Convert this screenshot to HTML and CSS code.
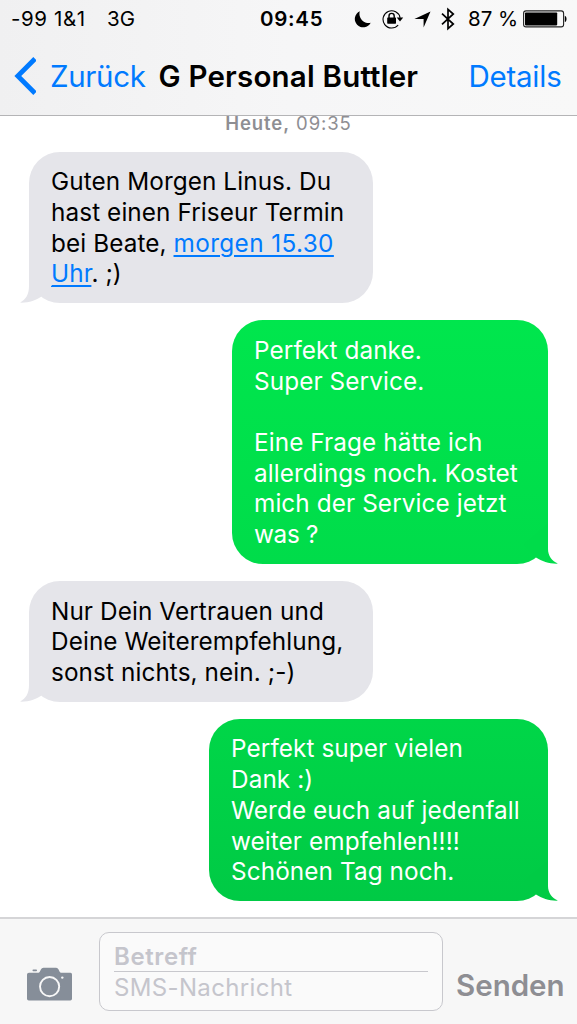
FILE: index.html
```html
<!DOCTYPE html>
<html lang="de">
<head>
<meta charset="utf-8">
<title>Nachrichten</title>
<link rel="stylesheet" href="styles.css">
</head>
<body>
<div class="phone">
  <header class="header">
    <div class="status">
      <div class="carrier"><span class="operator">-99 1&amp;1</span><span>3G</span></div>
      <div class="clock">09:45</div>
      <div class="indicators">
        <svg class="moon" width="17" height="17" viewBox="0 0 17 17"><path d="M5.800.3A8.400 8.400 0 1 0 16.700 11.800 9.200 9.200 0 0 1 5.800.3Z"/></svg>
        <svg class="lock" width="22" height="20" viewBox="0 0 22 20"><path d="M16.200 16A8.600 8.600 0 1 1 18.100 8.800" fill="none" stroke="#000" stroke-width="1.100"/><path d="M14.700 8.600h6.500L18 12.400Z"/><rect x="5.200" y="8.500" width="8.800" height="6.200" rx=".6"/><path d="M7 9V7a2.600 2.600 0 0 1 5.200 0v2" fill="none" stroke="#000" stroke-width="1.400"/></svg>
        <svg class="arrow" width="17" height="17" viewBox="0 0 17 17"><path d="M16.500.5 9.600 16.400V8.100H.4Z"/></svg>
        <svg class="bluetooth" width="14" height="24" viewBox="0 0 14 24"><path d="M1 6.600 12.300 17 7 21.700V2.300L12.300 7 1 17.400" fill="none" stroke="#000" stroke-width="1.700"/></svg>
        <span class="percent">87 %</span>
        <svg class="battery" width="44" height="18" viewBox="0 0 44 18"><rect x=".6" y=".9" width="40" height="16" rx="2.400" fill="none" stroke="#222" stroke-width="1.100"/><rect x="2" y="2.400" width="32.200" height="13" rx=".8"/><path d="M41.800 5.800c2.300.5 2.300 5.800 0 6.300Z"/></svg>
      </div>
    </div>
    <nav class="nav">
      <a class="back"><svg width="23" height="38" viewBox="0 0 23 38"><path d="M22 1.800 4.800 19l17.200 17.200" fill="none" stroke="#007aff" stroke-width="4.800"/></svg><span>Zurück</span></a>
      <h1 class="title">G Personal Buttler</h1>
      <a class="details">Details</a>
    </nav>
  </header>
  <main class="messages">
    <p class="date"><b>Heute,</b> 09:35</p>
    <div class="bubble received">
      <span class="line">Guten Morgen Linus. Du</span>
      <span class="line">hast einen Friseur Termin</span>
      <span class="line">bei Beate, <a class="link time">morgen 15.30</a></span>
      <span class="line"><a class="link">Uhr</a>. ;)</span>
      <svg class="tail" width="40" height="40" viewBox="0 0 40 40"><path d="M9 0V23C9 31 6 36.500 0 39.600C8 40 16 37.500 21.500 33.500L34 20Z"/></svg>
    </div>
    <div class="bubble sent question">
      <span class="line">Perfekt danke.</span>
      <span class="line">Super Service.</span>
      <span class="line">&nbsp;</span>
      <span class="line">Eine Frage hätte ich</span>
      <span class="line">allerdings noch. Kostet</span>
      <span class="line">mich der Service jetzt</span>
      <span class="line tight">was ?</span>
      <svg class="tail" width="40" height="40" viewBox="0 0 40 40"><path d="M30 0V25C30 32 34 37 40 39.600C32 40 24 37.500 18 33.500L6 20Z"/></svg>
    </div>
    <div class="bubble received">
      <span class="line">Nur Dein Vertrauen und</span>
      <span class="line">Deine Weiterempfehlung,</span>
      <span class="line">sonst nichts, nein. ;-)</span>
      <svg class="tail" width="40" height="40" viewBox="0 0 40 40"><path d="M9 0V23C9 31 6 36.500 0 39.600C8 40 16 37.500 21.500 33.500L34 20Z"/></svg>
    </div>
    <div class="bubble sent thanks">
      <span class="line">Perfekt super vielen</span>
      <span class="line">Dank :)</span>
      <span class="line">Werde euch auf jedenfall</span>
      <span class="line">weiter empfehlen!!!!</span>
      <span class="line">Schönen Tag noch.</span>
      <svg class="tail" width="40" height="40" viewBox="0 0 40 40"><path d="M30 0V25C30 32 34 37 40 39.600C32 40 24 37.500 18 33.500L6 20Z"/></svg>
    </div>
  </main>
  <footer class="composer">
    <svg class="camera" width="46" height="34" viewBox="0 0 46 34"><path d="M2 5.800H11.500C13.300 5.800 13.500.8 16.500.8H29c3 0 3.200 5 5 5H43.500Q45 5.800 45 7.500V31.800Q45 33.500 43.300 33.500H1.800Q0 33.500 0 31.800V7.600Q0 5.800 2 5.800Z" fill="#868e99"/><rect x="5.500" y="2.600" width="4.500" height="1.700" rx=".8" fill="#868e99"/><circle cx="22.600" cy="19.600" r="9.600" fill="none" stroke="#f7f7f7" stroke-width="1.900"/><circle cx="35.300" cy="10.600" r="1.200" fill="#f7f7f7"/></svg>
    <div class="field"><div class="subject">Betreff</div><div class="body">SMS-Nachricht</div></div>
    <div class="send">Senden</div>
  </footer>
</div>
</body>
</html>
```
FILE: styles.css
```css
* { box-sizing: border-box; }
body { margin: 0; background: #fff; font-family: Inter, "Liberation Sans", sans-serif; font-feature-settings: "calt" 0; color: #000; }
.phone { width: 577px; height: 1024px; display: flex; flex-direction: column; overflow: hidden; }
svg { display: block; flex: none; }

.header { flex: none; height: 116px; border-bottom: 1px solid #b4b4b6; background: linear-gradient(90deg, #f0f0f1, #f6f6f7 50%, #f8f8f8); white-space: nowrap; }
.status { display: grid; grid-template-columns: 260px 94px 1fr; height: 38px; align-items: center; font-size: 20.5px; line-height: 38px; }
.carrier { display: flex; padding-left: 11px; }
.operator { width: 96px; letter-spacing: 0.6px; }
.clock { font-weight: 600; letter-spacing: 0.7px; }
.indicators { display: flex; align-items: center; }
.lock { margin-left: 11px; }
.arrow { margin-left: 10px; }
.bluetooth { margin-left: 10px; }
.percent { margin-left: 13px; }
.battery { margin-left: 5px; }
.nav { display: flex; align-items: center; height: 76px; font-size: 29.5px; padding-left: 13px; }
.back { display: flex; align-items: center; gap: 14px; width: 145.5px; color: #007aff; letter-spacing: -0.35px; }
.title { margin: 0; width: 310px; font-size: 29.5px; font-weight: 600; letter-spacing: 0.2px; }
.details { color: #007aff; letter-spacing: -0.25px; }

.messages { flex: none; height: 801px; }
.date { margin: 0 0 17px; height: 18.5px; line-height: 14px; font-size: 18.5px; letter-spacing: 0.9px; color: #8e8e93; text-align: center; }
.date b { font-weight: 600; }
.bubble { position: relative; padding: 14.8px 22px 14.2px; border-radius: 31px; margin-bottom: 16.8px; font-size: 24.3px; line-height: 30.7px; letter-spacing: 0.1px; white-space: nowrap; }
.line { display: block; width: max-content; }
.tight { letter-spacing: -0.3px; }
.received { margin-left: 29px; background: #e5e5ea; width: 344px; }
.sent { margin-left: auto; margin-right: 29px; color: #fff; }
.question { width: 316px; background: linear-gradient(#00e64d, #00dc4a); }
.thanks { width: 339px; background: linear-gradient(#00d648, #00ca45); }
.link { color: #007aff; text-decoration: underline; text-decoration-thickness: 1.5px; text-underline-offset: 3px; }
.time { letter-spacing: 0.4px; }
.tail { position: absolute; bottom: 0; }
.received .tail { left: -9px; fill: #e5e5ea; }
.sent .tail { right: -10px; }
.question .tail { fill: #00dc4a; }
.thanks .tail { fill: #00cb45; }

.composer { flex: none; height: 107px; border-top: 2px solid #d5d5d7; background: #f7f7f7; display: flex; align-items: flex-start; padding-left: 27px; }
.camera { margin-top: 48px; }
.field { margin: 13px 0 0 26px; width: 344px; height: 79px; border: 1px solid #c8c8cd; border-radius: 10px; padding: 8px 14px 0; background: #fafafa; color: #c5c5cc; font-size: 24px; line-height: 32px; }
.subject { height: 31px; font-weight: 600; border-bottom: 1px solid #c8c8cd; letter-spacing: 0.6px; }
.body { letter-spacing: 0.35px; }
.send { margin: 48px 0 0 13px; font-size: 29.5px; line-height: 36px; font-weight: 600; color: #8e8e93; }
```
